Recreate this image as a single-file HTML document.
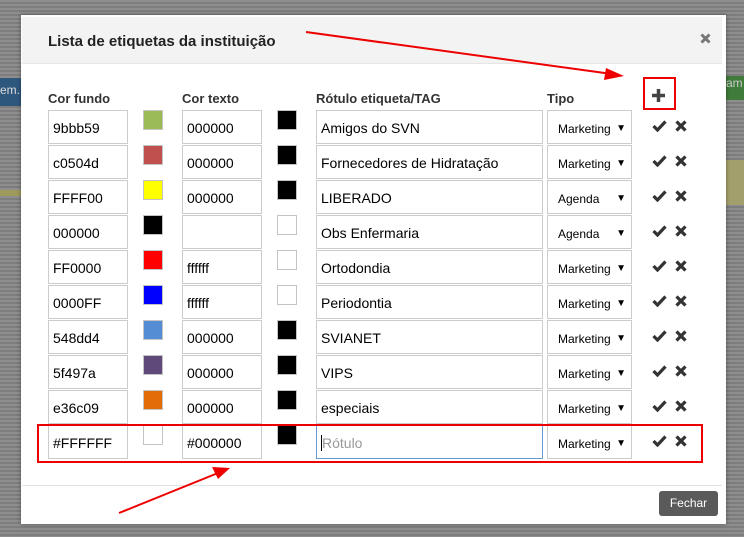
<!DOCTYPE html>
<html><head><meta charset="utf-8"><style>
body{margin:0;width:744px;height:537px;overflow:hidden;position:relative;font-family:"Liberation Sans","DejaVu Sans",sans-serif;
background:repeating-linear-gradient(#8e8e8e 0 2px,#7d7d7d 2px 4px);}
.a{position:absolute;}
.modal{left:21px;top:15px;width:705px;height:509px;background:#fff;box-shadow:0 0 4px rgba(0,0,0,.4);}
.hdr{left:22px;top:17px;width:700px;height:46px;background:#f3f3f3;border-bottom:1px solid #e6e6e6;}
.th{font-weight:bold;font-size:13px;color:#333;top:91px;}
.in{box-sizing:border-box;border:1px solid #ccc;height:34px;background:#fff;font-size:14px;color:#000;padding:9px 4px 0;white-space:nowrap;}
.sw{box-sizing:border-box;width:20px;height:20px;border:1px solid #c4c4c4;}
.sel{font-size:12px;padding:11px 0 0 10px;}
.sel:after{content:"\25BC";position:absolute;right:5px;top:12px;font-size:10px;}
</style></head><body>
<div class="a" style="left:0;top:78px;width:21px;height:28px;background:#2e577e;color:#ddd;font-size:12px;line-height:24px">em..</div>
<div class="a" style="left:726px;top:76px;width:18px;height:24px;background:#3f7b3a;color:#ccc;font-size:12px">am</div>
<div class="a" style="left:0;top:190px;width:21px;height:6px;background:#9d9a5c"></div>
<div class="a" style="left:726px;top:160px;width:18px;height:45px;background:#a39f6c"></div>
<div class="a modal"></div>
<div class="a hdr"></div>
<div class="a" style="left:48px;top:33px;font-size:15px;font-weight:bold;color:#222">Lista de etiquetas da instituição</div>
<svg class="a" style="left:700px;top:33px" width="11" height="11"><path d="M1.5 1.5L9.5 9.5M9.5 1.5L1.5 9.5" stroke="#777" stroke-width="3"/></svg>
<div class="a th" style="left:48px">Cor fundo</div>
<div class="a th" style="left:182px">Cor texto</div>
<div class="a th" style="left:316px">Rótulo etiqueta/TAG</div>
<div class="a th" style="left:547px">Tipo</div>
<div class="a" style="left:643px;top:77px;width:33px;height:33px;box-sizing:border-box;border:2px solid #e00"></div>
<svg class="a" style="left:651px;top:88px" width="15" height="15"><path d="M7.5 1V14M1 7.5H14" stroke="#444" stroke-width="3.5"/></svg>
<div id="rows"></div>
<div class="a" style="left:22px;top:485px;width:700px;height:1px;background:#e2e2e2"></div>
<div class="a" style="left:659px;top:491px;width:59px;height:25px;background:#5a5a5a;border-radius:3px;color:#fff;font-size:12px;text-align:center;line-height:25px">Fechar</div>
<div class="a" style="left:37px;top:424px;width:666px;height:39px;box-sizing:border-box;border:2px solid #e00"></div>
<svg class="a" style="left:0;top:0" width="744" height="537">
<line x1="306" y1="32" x2="612" y2="74" stroke="#e00" stroke-width="2"/>
<polygon points="624,76 606,68 604,80" fill="#e00"/>
<line x1="119" y1="513" x2="218" y2="473" stroke="#e00" stroke-width="2"/>
<polygon points="230,468 212,467 218,479" fill="#e00"/>
</svg>
<script>
var d=[["9bbb59","#9bbb59","000000","#000","Amigos do SVN","Marketing"],
["c0504d","#c0504d","000000","#000","Fornecedores de Hidratação","Marketing"],
["FFFF00","#ffff00","000000","#000","LIBERADO","Agenda"],
["000000","#000","","#fff","Obs Enfermaria","Agenda"],
["FF0000","#f00","ffffff","#fff","Ortodondia","Marketing"],
["0000FF","#00f","ffffff","#fff","Periodontia","Marketing"],
["548dd4","#548dd4","000000","#000","SVIANET","Marketing"],
["5f497a","#5f497a","000000","#000","VIPS","Marketing"],
["e36c09","#e36c09","000000","#000","especiais","Marketing"],
["#FFFFFF","#fff","#000000","#000","","Marketing"]];
var h="";
d.forEach(function(r,i){var t=110+35*i;
h+='<div class="a in" style="left:48px;top:'+t+'px;width:80px">'+r[0]+'</div>';
h+='<div class="a sw" style="left:143px;top:'+t+'px;background:'+r[1]+'"></div>';
h+='<div class="a in" style="left:182px;top:'+t+'px;width:80px">'+r[2]+'</div>';
h+='<div class="a sw" style="left:277px;top:'+t+'px;background:'+r[3]+'"></div>';
h+='<div class="a in" style="left:316px;top:'+t+'px;width:227px;'+(i==9?'border-color:#6a9ad0;color:#999;':'')+'">'+(i==9?'<span style="border-left:1px solid #000">Rótulo</span>':r[4])+'</div>';
h+='<div class="a in sel" style="left:547px;top:'+t+'px;width:85px">'+r[5]+'</div>';
h+='<svg class="a" style="left:652px;top:'+(t+10)+'px" width="15" height="12"><path d="M1.5 6L5.5 10L13.5 1.5" fill="none" stroke="#333" stroke-width="3.2"/></svg>';
h+='<svg class="a" style="left:675px;top:'+(t+10)+'px" width="12" height="12"><path d="M1.5 1.5L10.5 10.5M10.5 1.5L1.5 10.5" stroke="#333" stroke-width="3.2"/></svg>';});
document.getElementById("rows").innerHTML=h;
</script>
</body></html>
